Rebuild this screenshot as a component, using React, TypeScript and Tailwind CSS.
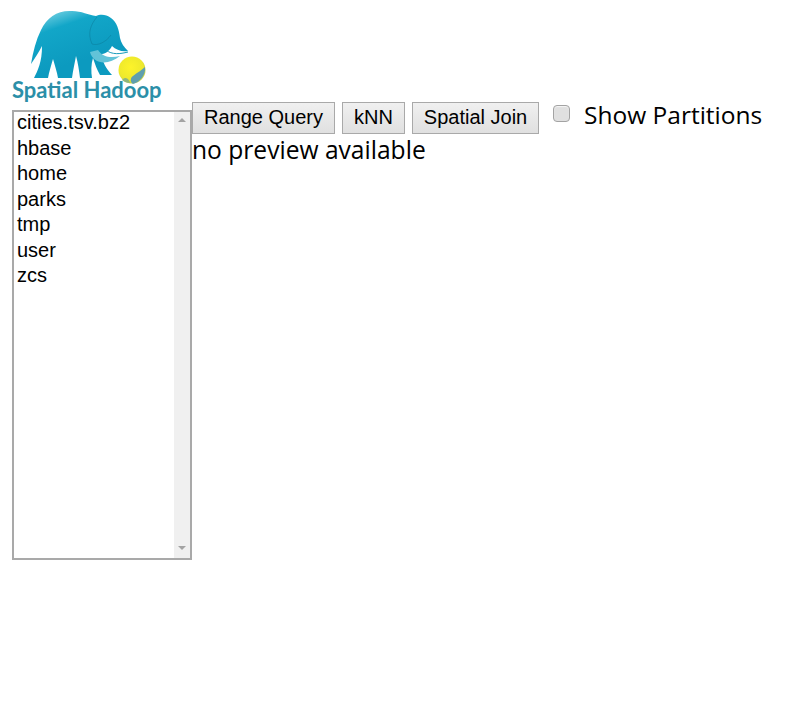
export default function App() {
  const items = ["cities.tsv.bz2", "hbase", "home", "parks", "tmp", "user", "zcs"];
  return (
    <div className="flex items-start pl-3 pt-2 text-black font-['Liberation_Sans',sans-serif]">
      <div className="flex w-[180px] flex-col">
        <div className="relative h-[102px] w-[150px]">
          <svg width="150" height="80" viewBox="12 8 150 80" className="block">
            <defs>
              <linearGradient id="el" x1="0.25" y1="0" x2="0.6" y2="0.7">
                <stop offset="0" stopColor="#6ccde0" />
                <stop offset="0.3" stopColor="#12a6c8" />
                <stop offset="1" stopColor="#0c9abf" />
              </linearGradient>
              <radialGradient id="gl" cx="0.45" cy="0.4" r="0.65">
                <stop offset="0" stopColor="#fdf32a" />
                <stop offset="0.7" stopColor="#eee92c" />
                <stop offset="1" stopColor="#b9c94a" />
              </radialGradient>
            </defs>
            <path d="M34 78 C38 70 42 62 42 46 C39 52 35 58 31 64 C33 52 36 40 41 30 C47 17 58 10 72 11 C82 11 88 15 96 16 C100 14 106 14 111 18 C117 22 119 30 120 38 C121 43 124 47 128 51 C122 52 116 50 112 46 C110 50 106 54 102 54 C102 62 106 68 112 75 L100 75 C97 70 95 64 93 58 C91 64 91 72 92 78 L80 78 C79 70 78 63 76 56 C75 62 73 70 72 78 L58 78 C57 72 55 66 53 59 C51 66 49 72 48 78 Z" fill="url(#el)" />
            <path d="M90 52 C93 64 108 66 120 56 C112 58 103 58 98 50 Z" fill="#62c3d8" />
            <path d="M106 50 C112 55 120 54 128 52" fill="none" stroke="#1b9cbc" strokeWidth="1" />
            <path d="M97 17 C91 24 87 33 92 44 M92 44 C98 46 106 42 111 35" fill="none" stroke="#0a7d9c" strokeWidth="0.7" opacity="0.8" />
            <circle cx="132" cy="70" r="13.500" fill="url(#gl)" />
            <path d="M133 76 C138 72 142 70 145 67 C146 75 140 82 133 84 C130 82 130 78 133 76 Z" fill="#5f9fae" />
            <path d="M122 80 C126 76 129 79 130 83 C127 83 124 82 122 80 Z" fill="#8fb67c" />
          </svg>
          <span className="absolute left-0 top-[68px] font-['Lato',sans-serif] text-[22px] leading-[28px] font-bold whitespace-nowrap text-[#2b8fa8]">Spatial Hadoop</span>
        </div>
        <div className="relative h-[450px] w-[180px] border-2 border-[#a9a9a9] bg-white">
          <ul className="-mt-[2px] pl-[3px] text-[20px] leading-[25.500px]">
            {items.map((t) => (
              <li key={t} className="h-[25.500px]">{t}</li>
            ))}
          </ul>
          <div className="absolute top-0 right-0 bottom-0 flex w-[16px] flex-col items-center justify-between bg-[#f0f0f0] pt-[6px] pb-[8px]">
            <div className="h-0 w-0 border-x-[4px] border-b-[4px] border-x-transparent border-b-[#a3a3a3]" />
            <div className="h-0 w-0 border-x-[4px] border-t-[4px] border-x-transparent border-t-[#a3a3a3]" />
          </div>
        </div>
      </div>
      <div className="mt-[94px] flex flex-col">
        <div className="flex items-start">
          <button className="h-8 w-[143px] border border-[#a9a9a9] bg-gradient-to-b from-[#f0f0f0] to-[#e0e0e0] pb-[2px] text-[20px] leading-[24px]">Range Query</button>
          <button className="ml-[7px] h-8 w-[63px] border border-[#a9a9a9] bg-gradient-to-b from-[#f0f0f0] to-[#e0e0e0] pb-[2px] text-[20px] leading-[24px]">kNN</button>
          <button className="ml-[7px] h-8 w-[127px] border border-[#a9a9a9] bg-gradient-to-b from-[#f0f0f0] to-[#e0e0e0] pb-[2px] text-[20px] leading-[24px]">Spatial Join</button>
          <div className="mt-[3px] ml-[14px] h-[17px] w-[17px] rounded-[4px] border border-[#a3a3a3] bg-[#e0e0e0] shadow-[inset_0_1px_1px_#f5f5f5]" />
          <span className="ml-[14px] -mt-[1px] font-['Open_Sans',sans-serif] text-[24.500px] leading-[28px] whitespace-nowrap">Show Partitions</span>
        </div>
        <div className="-mt-[1px] font-['Open_Sans',sans-serif] text-[24.600px] leading-[33px]">no preview available</div>
      </div>
    </div>
  );
}
